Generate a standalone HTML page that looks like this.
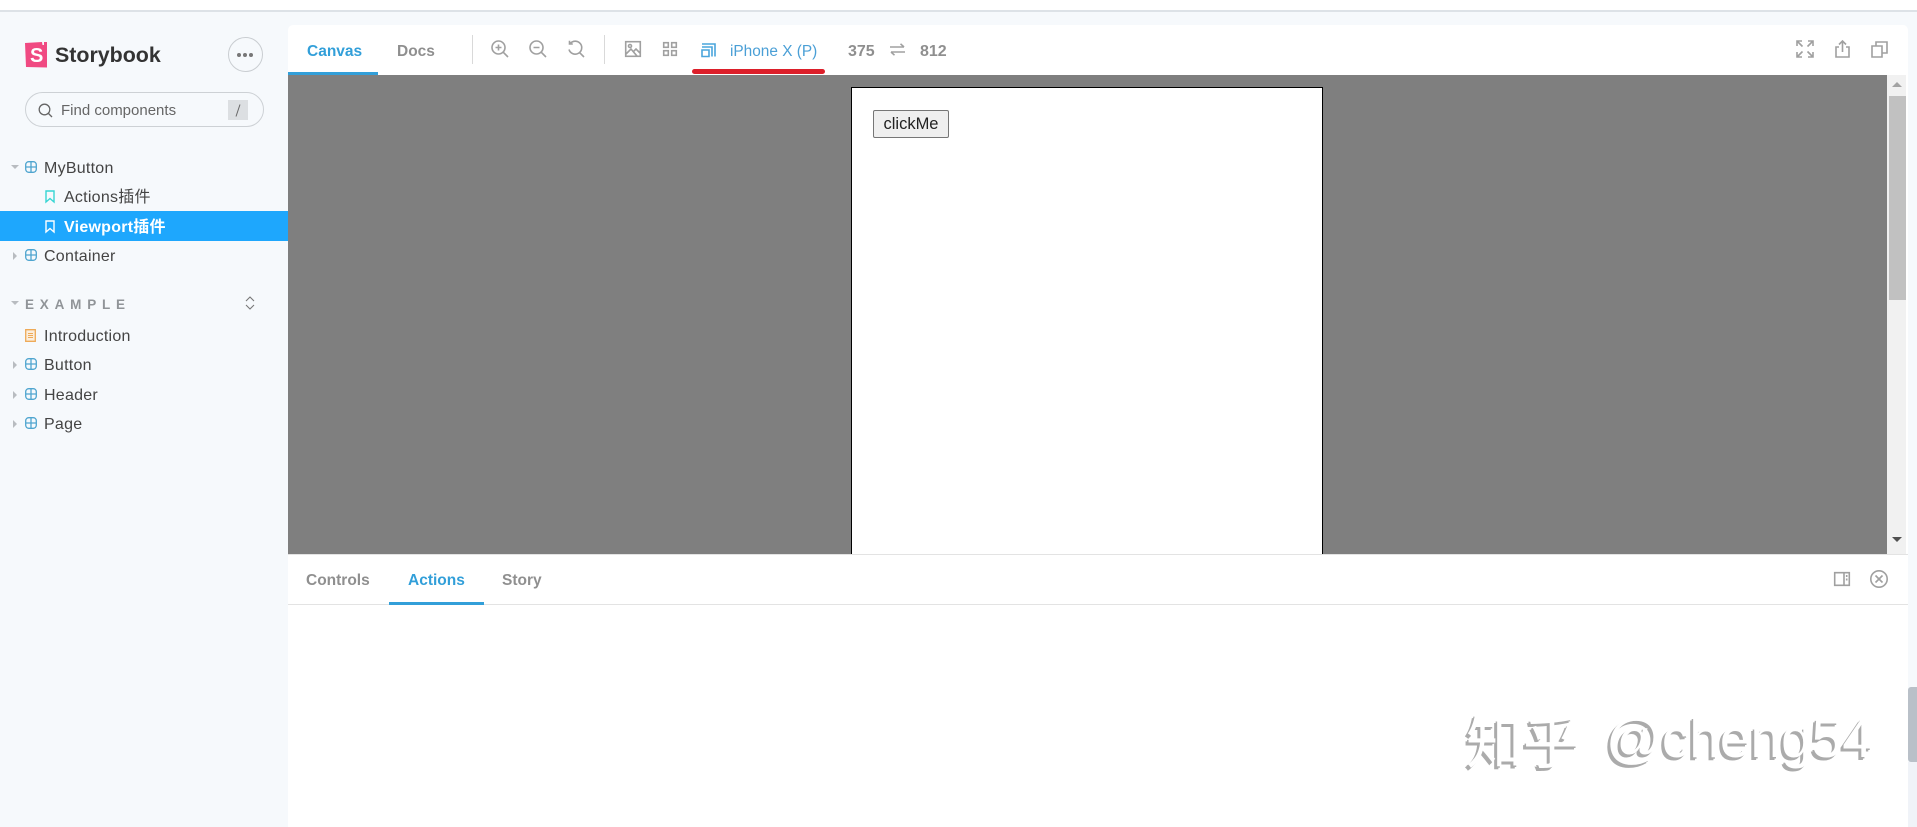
<!DOCTYPE html>
<html lang="zh"><head><meta charset="utf-8"><title>Storybook</title>
<style>
html,body{margin:0;padding:0;width:1917px;height:827px;overflow:hidden;background:#f6f9fc}
body{position:relative;font-family:"Liberation Sans","Noto Sans CJK SC",sans-serif;color:#333}
.a{position:absolute}
.t{position:absolute;white-space:nowrap;line-height:20px}
svg{position:absolute;overflow:visible;fill:none}
.row{font-size:16px;letter-spacing:.25px;color:#444}
.tab{font-size:15.5px;font-weight:700;color:#8f8f8f}
.blue{color:#329fd9}
.i{stroke:#a0a0a0;stroke-width:1.6}
.tree{stroke:#4fa5cf;stroke-width:1.3}
.caret{fill:#b8bcc0}
</style></head><body>
<div class="a" style="left:0;top:0;width:1917px;height:10px;background:#fff"></div>
<div class="a" style="left:0;top:10px;width:1917px;height:2px;background:#dde2e7"></div>

<!-- sidebar -->
<svg style="left:24px;top:41px" width="24" height="27" viewBox="0 0 24 27">
<path d="M1 2 L18 1 L18.500 4 L20 4 L20 1 L23 1 L23 26.500 L2 26Z" fill="#f04a82"/>
<text x="6" y="21" font-family="Liberation Sans" font-weight="700" font-size="20" fill="#fff">S</text></svg>
<div class="t" style="left:55px;top:44px;font-size:21.400px;font-weight:700;color:#333;line-height:22px">Storybook</div>
<div class="a" style="left:228px;top:37px;width:33px;height:33px;border:1px solid #c9cdd1;border-radius:50%"></div>
<svg style="left:236px;top:52px" width="18" height="6"><circle cx="3" cy="3" r="2" fill="#777"/><circle cx="9" cy="3" r="2" fill="#777"/><circle cx="15" cy="3" r="2" fill="#777"/></svg>
<div class="a" style="left:25px;top:92px;width:237px;height:33px;border:1px solid #cdd1d5;border-radius:18px"></div>
<svg style="left:38px;top:103px" width="15" height="15" viewBox="0 0 15 15"><circle cx="6.500" cy="6.500" r="5.300" stroke="#666" stroke-width="1.300"/><path d="M10.500 10.500L14 14" stroke="#666" stroke-width="1.300"/></svg>
<div class="t" style="left:61px;top:101px;font-size:15px;color:#666">Find components</div>
<div class="a" style="left:228px;top:100px;width:20px;height:20px;background:#dcdfe2"></div>
<svg style="left:233px;top:104px" width="10" height="13"><path d="M7 .5L3 12.500" stroke="#666" stroke-width="1"/></svg>

<svg style="left:11px;top:165px" width="8" height="5"><path class="caret" d="M0 0H8L4 4Z"/></svg>
<svg style="left:25px;top:161px" width="12" height="12" viewBox="0 0 12 12"><rect class="tree" x=".7" y=".7" width="10.600" height="10.600" rx="3"/><path class="tree" d="M6 1V11M1 6H11"/></svg>
<div class="t row" style="left:44px;top:159px">MyButton</div>
<svg style="left:45px;top:190px" width="10" height="13" viewBox="0 0 10 13"><path d="M1 1H9V12L5 8.500 1 12Z" stroke="#37d5d3" stroke-width="1.400"/></svg>
<div class="t row" style="left:64px;top:188px">Actions插件</div>
<div class="a" style="left:0;top:211px;width:288px;height:30px;background:#1ea7fd"></div>
<svg style="left:45px;top:220px" width="10" height="13" viewBox="0 0 10 13"><path d="M1 1H9V12L5 8.500 1 12Z" stroke="#fff" stroke-width="1.400"/></svg>
<div class="t row" style="left:64px;top:218px;color:#fff;font-weight:700">Viewport插件</div>

<svg style="left:13px;top:252px" width="5" height="8"><path class="caret" d="M0 0V8L4 4Z"/></svg>
<svg style="left:25px;top:249px" width="12" height="12" viewBox="0 0 12 12"><rect class="tree" x=".7" y=".7" width="10.600" height="10.600" rx="3"/><path class="tree" d="M6 1V11M1 6H11"/></svg>
<div class="t row" style="left:44px;top:247px">Container</div>

<svg style="left:11px;top:301px" width="8" height="5"><path class="caret" d="M0 0H8L4 4Z"/></svg>
<div class="t" style="left:25px;top:295px;font-size:13.500px;font-weight:700;letter-spacing:5.800px;color:#909498">EXAMPLE</div>
<svg style="left:245px;top:296px" width="10" height="14" viewBox="0 0 10 14"><path d="M1 5L5 1 9 5M1 9L5 13 9 9" stroke="#777" stroke-width="1.100"/></svg>

<svg style="left:25px;top:329px" width="11" height="13" viewBox="0 0 11 13"><path d="M.7.7H10.300V12.300H.7Z" stroke="#eeaa58" stroke-width="1.300" fill="#fbeedd"/><path d="M3 4.500H8M3 6.500H8M3 8.500H8" stroke="#eeaa58"/></svg>
<div class="t row" style="left:44px;top:327px">Introduction</div>

<svg style="left:13px;top:361px" width="5" height="8"><path class="caret" d="M0 0V8L4 4Z"/></svg>
<svg style="left:25px;top:358px" width="12" height="12" viewBox="0 0 12 12"><rect class="tree" x=".7" y=".7" width="10.600" height="10.600" rx="3"/><path class="tree" d="M6 1V11M1 6H11"/></svg>
<div class="t row" style="left:44px;top:356px">Button</div>

<svg style="left:13px;top:391px" width="5" height="8"><path class="caret" d="M0 0V8L4 4Z"/></svg>
<svg style="left:25px;top:388px" width="12" height="12" viewBox="0 0 12 12"><rect class="tree" x=".7" y=".7" width="10.600" height="10.600" rx="3"/><path class="tree" d="M6 1V11M1 6H11"/></svg>
<div class="t row" style="left:44px;top:386px">Header</div>

<svg style="left:13px;top:420px" width="5" height="8"><path class="caret" d="M0 0V8L4 4Z"/></svg>
<svg style="left:25px;top:417px" width="12" height="12" viewBox="0 0 12 12"><rect class="tree" x=".7" y=".7" width="10.600" height="10.600" rx="3"/><path class="tree" d="M6 1V11M1 6H11"/></svg>
<div class="t row" style="left:44px;top:415px">Page</div>

<!-- main card -->
<div class="a" style="left:288px;top:25px;width:1620px;height:802px;background:#fff;border-radius:5px 5px 0 0"></div>

<!-- toolbar -->
<div class="t tab blue" style="left:307px;top:42px">Canvas</div>
<div class="a" style="left:288px;top:72px;width:90px;height:3px;background:#329fd9"></div>
<div class="t tab" style="left:397px;top:42px">Docs</div>
<div class="a" style="left:472px;top:35px;width:1px;height:29px;background:#d9d9d9"></div>
<div class="a" style="left:604px;top:35px;width:1px;height:29px;background:#d9d9d9"></div>

<svg style="left:491px;top:40px" width="18" height="18" viewBox="0 0 18 18"><circle class="i" cx="7.500" cy="7.500" r="6.500"/><path class="i" d="M12.300 12.300L17 17M4.500 7.500H10.500M7.500 4.500V10.500"/></svg>
<svg style="left:529px;top:40px" width="18" height="18" viewBox="0 0 18 18"><circle class="i" cx="7.500" cy="7.500" r="6.500"/><path class="i" d="M12.300 12.300L17 17M4.500 7.500H10.500"/></svg>
<svg style="left:567px;top:40px" width="18" height="18" viewBox="0 0 18 18"><path class="i" d="M3.500 3.200A6.500 6.500 0 1 1 2 9.500M12.800 12.800L17 17M2.500 .8V4H5.800"/></svg>
<svg style="left:625px;top:41px" width="16" height="16" viewBox="0 0 16 16"><rect class="i" x=".7" y=".7" width="14.600" height="14.600"/><circle class="i" cx="5" cy="5" r="1.500"/><path class="i" d="M1 13L6 8 12 15M8.500 10.500L11 8 15 12"/></svg>
<svg style="left:663px;top:42px" width="14" height="14" viewBox="0 0 14 14"><rect class="i" x=".7" y=".7" width="4.600" height="4.600"/><rect class="i" x="8.700" y=".7" width="4.600" height="4.600"/><rect class="i" x=".7" y="8.700" width="4.600" height="4.600"/><rect class="i" x="8.700" y="8.700" width="4.600" height="4.600"/></svg>
<svg style="left:701px;top:43px" width="15" height="14" viewBox="0 0 15 14"><path d="M1 1H14V13.500M1 4H11V13.500M1 7H8V13.500H1Z" stroke="#4aa5dc" stroke-width="1.600"/></svg>
<div class="t blue" style="left:730px;top:42px;font-size:15.400px;color:#4a9fd6">iPhone X (P)</div>
<div class="a" style="left:692px;top:69px;width:133px;height:5px;background:#dc1f2a;border-radius:3px"></div>
<div class="t tab" style="left:848px;top:42px;font-size:16px">375</div>
<svg style="left:890px;top:43px" width="15" height="13" viewBox="0 0 15 13"><path class="i" d="M0 4H14M10.500 .8L14 4M15 9H1M4.500 12.200L1 9"/></svg>
<div class="t tab" style="left:920px;top:42px;font-size:16px">812</div>

<svg style="left:1796px;top:40px" width="18" height="18" viewBox="0 0 18 18"><path class="i" stroke-width="1.700" d="M1 6V1H6M1 1L6.500 6.500M12 1H17V6M17 1L11.500 6.500M1 12V17H6M1 17L6.500 11.500M12 17H17V12M17 17L11.500 11.500"/></svg>
<svg style="left:1835px;top:40px" width="15" height="18" viewBox="0 0 15 18"><path class="i" stroke-width="1.700" d="M4 7H1V17H14V7H11M7.500 12V1M4 4.500L7.500 1 11 4.500"/></svg>
<svg style="left:1871px;top:41px" width="17" height="17" viewBox="0 0 17 17"><path class="i" stroke-width="1.700" d="M1 5H11V16H1ZM5 5V1H16V12H11"/></svg>

<!-- canvas -->
<div class="a" style="left:288px;top:75px;width:1599px;height:479px;background:#7f7f7f"></div>
<div class="a" style="left:851px;top:87px;width:470px;height:467px;background:#fff;border:1px solid #000;border-bottom:0;box-sizing:content-box"></div>
<div class="a" style="left:873px;top:110px;width:74px;height:26px;background:#efefef;border:1px solid #767676;border-radius:2px;font:16.500px/27px 'Liberation Sans',sans-serif;color:#222;text-align:center">clickMe</div>

<!-- scrollbar -->
<div class="a" style="left:1887px;top:75px;width:19px;height:479px;background:#f1f1f1"></div>
<div class="a" style="left:1889px;top:96px;width:17px;height:204px;background:#c1c1c1"></div>
<svg style="left:1892px;top:82px" width="10" height="6"><path d="M5 0L10 5H0Z" fill="#a3a3a3"/></svg>
<svg style="left:1892px;top:537px" width="10" height="6"><path d="M0 0H10L5 5Z" fill="#505050"/></svg>

<!-- panel -->
<div class="a" style="left:288px;top:554px;width:1620px;height:1px;background:#e3e3e3"></div>
<div class="t tab" style="left:306px;top:571px">Controls</div>
<div class="t tab blue" style="left:408px;top:571px">Actions</div>
<div class="t tab" style="left:502px;top:571px">Story</div>
<div class="a" style="left:288px;top:604px;width:1620px;height:1px;background:#e3e3e3"></div>
<div class="a" style="left:389px;top:602px;width:95px;height:3px;background:#329fd9"></div>
<svg style="left:1834px;top:572px" width="16" height="14" viewBox="0 0 16 14"><path class="i" d="M.7.7H15.300V13.300H.7ZM10 .7V13.300M12.700 3V5M12.700 6.500V8.500"/></svg>
<svg style="left:1870px;top:570px" width="18" height="18" viewBox="0 0 18 18"><circle class="i" cx="9" cy="9" r="8.200"/><path class="i" d="M5.500 5.500L12.500 12.500M12.500 5.500L5.500 12.500"/></svg>

<!-- right strip -->
<div class="a" style="left:1908px;top:687px;width:9px;height:75px;background:#b9c0c8;border-radius:3px 0 0 3px"></div>
<div class="a" style="left:1908px;top:762px;width:9px;height:65px;background:#f0f3f8"></div>

<!-- watermark -->
<div class="t" style="left:1466px;top:699px;line-height:80px;font-size:57px;color:#fff;text-shadow:-1.500px 1.500px 0 #ababab,-3px 3px 0 #ababab;font-family:'Noto Sans CJK SC',sans-serif">知乎</div>
<div class="t" style="left:1606px;top:698px;line-height:80px;font-size:55px;color:#fff;text-shadow:-1.500px 1.500px 0 #ababab,-3px 3px 0 #ababab">@cheng54</div>
</body></html>
